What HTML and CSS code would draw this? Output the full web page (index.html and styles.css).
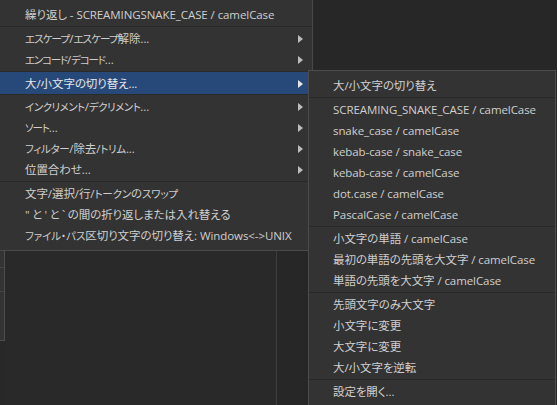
FILE: index.html
```html
<!DOCTYPE html>
<html lang="ja">
<head>
<meta charset="utf-8">
<title>Menu</title>
<link rel="stylesheet" href="styles.css">
</head>
<body>
<div class="app">
  <div class="sidebar">
    <div class="side-panel">
      <div class="sp-row sp-a"></div>
      <div class="sp-row sp-b"></div>
      <div class="sp-row sp-c"></div>
    </div>
  </div>
  <div class="editor"></div>
  <div class="rest"></div>
</div>

<div class="menu main-menu">
  <div class="item"><span>繰り返し - SCREAMINGSNAKE_CASE / camelCase</span></div>
  <div class="sep"></div>
  <div class="item sub"><span><span class="kt k18">エスケープ</span>/<span class="kt k18">エスケープ</span>解除...</span><i class="arrow"></i></div>
  <div class="item sub"><span><span class="kt k22">エンコード</span>/<span class="kt k22">デコード</span>...</span><i class="arrow"></i></div>
  <div class="item sub active"><span>大/小文字の切り替え...</span><i class="arrow"></i></div>
  <div class="item sub"><span><span class="kt k14">インクリメント</span>/<span class="kt k14">デクリメント</span>...</span><i class="arrow"></i></div>
  <div class="item sub"><span><span class="kt k20">ソート</span>...</span><i class="arrow"></i></div>
  <div class="item sub"><span><span class="kt k12">フィルター</span>/除去/<span class="kt k12">トリム</span>...</span><i class="arrow"></i></div>
  <div class="item sub"><span>位置合わせ...</span><i class="arrow"></i></div>
  <div class="sep"></div>
  <div class="item"><span>文字/選択/行/<span class="kt k11">トークン</span>の<span class="kt k11">スワップ</span></span></div>
  <div class="item"><span><span class="ws">" と ' と ` </span>の間の折り返しまたは入れ替える</span></div>
  <div class="item"><span><span class="kt k10">ファイル・パス</span>区切り文字の切り替え: Windows&lt;-&gt;UNIX</span></div>
</div>

<div class="menu sub-menu">
  <div class="item">大/小文字の切り替え</div>
  <div class="sep"></div>
  <div class="item">SCREAMING_SNAKE_CASE / camelCase</div>
  <div class="item">snake_case / camelCase</div>
  <div class="item">kebab-case / snake_case</div>
  <div class="item">kebab-case / camelCase</div>
  <div class="item">dot.case / camelCase</div>
  <div class="item">PascalCase / camelCase</div>
  <div class="sep"></div>
  <div class="item">小文字の単語 / camelCase</div>
  <div class="item">最初の単語の先頭を大文字 / camelCase</div>
  <div class="item">単語の先頭を大文字 / camelCase</div>
  <div class="sep"></div>
  <div class="item">先頭文字のみ大文字</div>
  <div class="item">小文字に変更</div>
  <div class="item">大文字に変更</div>
  <div class="item">大/小文字を逆転</div>
  <div class="sep"></div>
  <div class="item">設定を開く...</div>
</div>
</body>
</html>
```

FILE: styles.css
```css
* { box-sizing: border-box; }

html, body {
  margin: 0;
  padding: 0;
  width: 557px;
  height: 405px;
  overflow: hidden;
  background: #282828;
  font-family: "Open Sans", "Noto Sans CJK JP", sans-serif;
  font-size: 11.5px;
  font-feature-settings: "palt";
  letter-spacing: -0.08px;
  color: #cfcfcf;
}

.app {
  display: flex;
  height: 405px;
}

.sidebar {
  width: 5px;
}

.side-panel {
  margin-top: 250px;
  height: 91px;
  background: #333333;
  border-right: 1px solid #4e4e4e;
  border-bottom: 1px solid #4e4e4e;
  display: flex;
  flex-direction: column;
}

.sp-row { border-bottom: 1px solid #454545; }
.sp-a { height: 18px; }
.sp-b { height: 24px; }
.sp-c { flex: 1; border-bottom: none; }

.editor {
  width: 272px;
  background: #292929;
  border-right: 1px solid #3d3d3d;
}

.rest {
  flex: 1;
  background: #272727;
}

.menu {
  position: absolute;
  background: #333333;
  border: 1px solid #4a4a4a;
  padding: 4px 0;
}

.main-menu {
  left: -1px;
  top: -1px;
  width: 314px;
  height: 252px;
}

.sub-menu {
  left: 308px;
  top: 70px;
  width: 248px;
  height: 340px;
  border-color: #4d4d4d;
}

.item {
  height: 21px;
  display: flex;
  align-items: center;
  justify-content: space-between;
  white-space: nowrap;
  padding: 1px 9px 0 25px;
  line-height: 20px;
}

.sub-menu .item {
  padding-left: 24px;
}

.item.active {
  height: 24px;
  margin: 1px 0;
  background: #27497a;
  border-top: 1px solid #2a2a2a;
  border-bottom: 1px solid #2a2a2a;
  color: #e6e6e6;
}

/* katakana runs are narrower in the original UI font */
.kt { font-size: 10.5px; }
.k10 { letter-spacing: -0.1px; }
.k11 { letter-spacing: -0.2px; }
.k12 { letter-spacing: -0.35px; }
.k14 { letter-spacing: -0.5px; }
.k18 { letter-spacing: -0.9px; }
.k20 { letter-spacing: -1.1px; }
.k22 { letter-spacing: -1.2px; }
.ws { word-spacing: -0.4px; }

.sep {
  height: 3px;
  display: flex;
  align-items: center;
}

.sep::before {
  content: "";
  display: block;
  width: 100%;
  height: 1px;
  background: #282828;
}

.arrow {
  display: block;
  width: 0;
  height: 0;
  border-left: 5px solid #bdbdbd;
  border-top: 4px solid transparent;
  border-bottom: 4px solid transparent;
}

.item.active .arrow {
  border-left-color: #e6e6e6;
}
```
